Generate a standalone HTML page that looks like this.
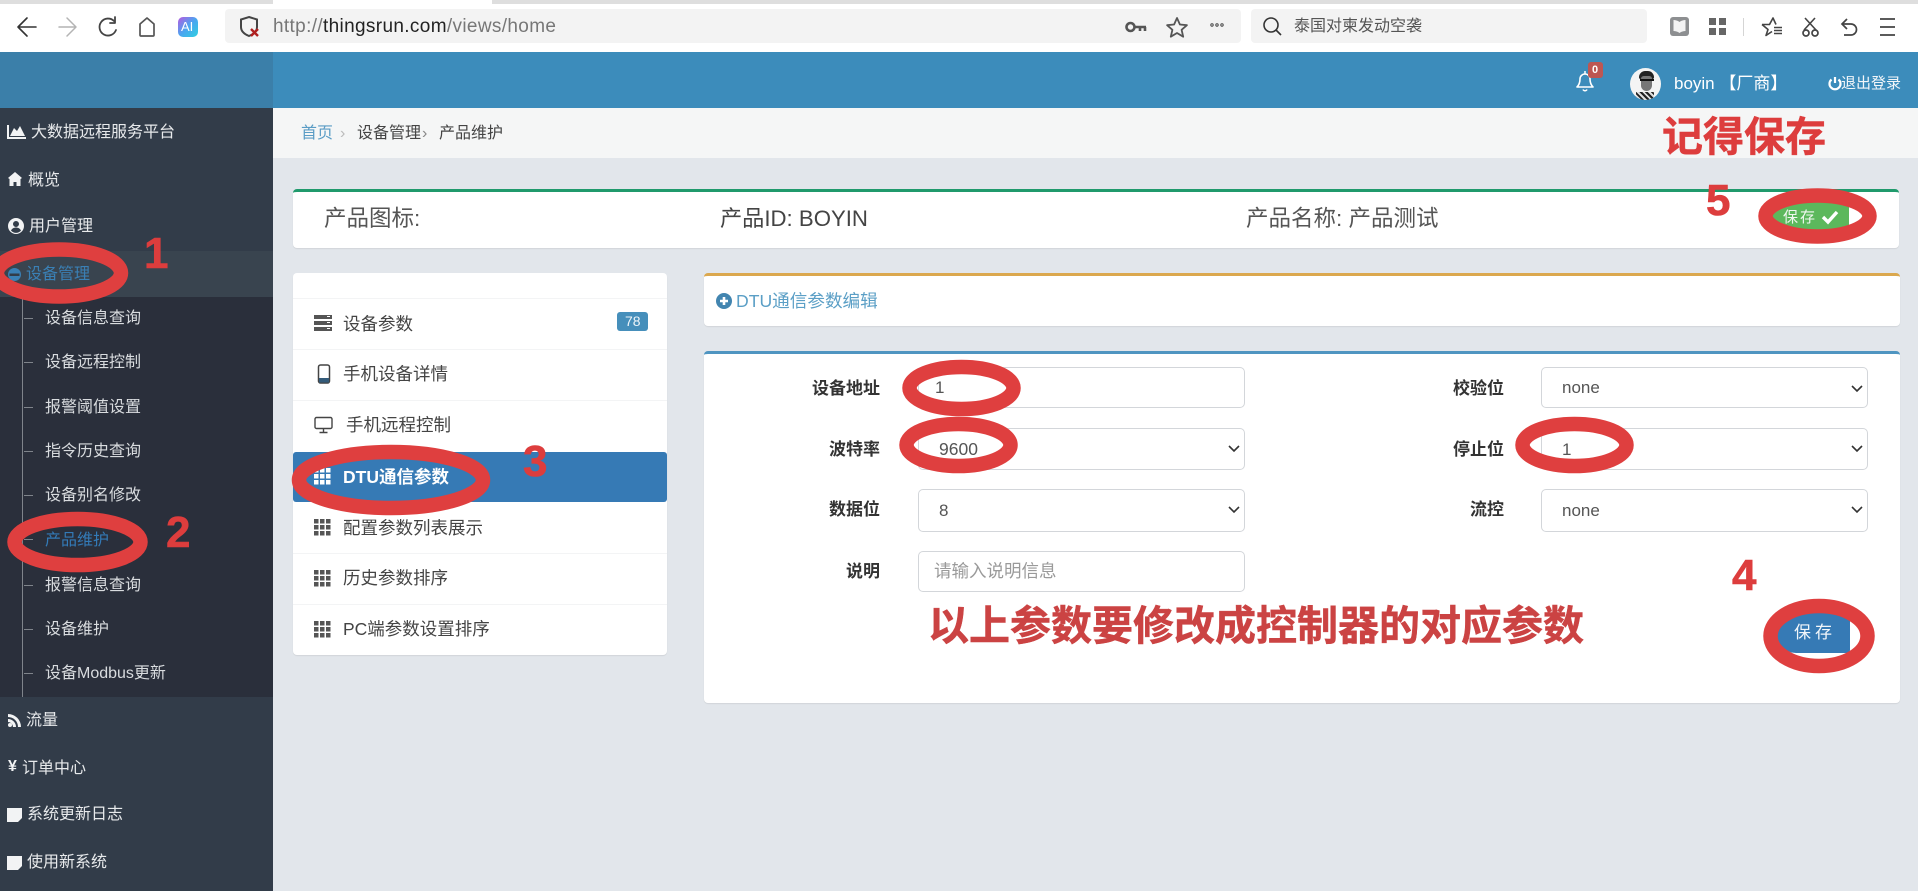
<!DOCTYPE html>
<html lang="zh-CN"><head><meta charset="utf-8"><title>DTU通信参数</title>
<style>
html,body{margin:0;padding:0;width:1918px;height:891px;overflow:hidden;background:#e2e6eb;font-family:"Liberation Sans","Noto Sans CJK SC",sans-serif}
.a{position:absolute}
.t{position:absolute;white-space:nowrap;line-height:1}
.card{position:absolute;background:#fff;border-radius:4px;box-shadow:0 1px 1px rgba(0,0,0,.08);box-sizing:border-box}
.s{font-size:16px;color:#e8eaec}
.sub{font-size:16px;color:#d9dcdf;left:45px}
.li{font-size:17.5px;color:#444;left:343px}
.lab{font-size:17px;font-weight:700;color:#333;text-align:right}
.f{position:absolute;box-sizing:border-box;background:#fff;border:1px solid #d3d6da;border-radius:5px;font:17px "Liberation Sans","Noto Sans CJK SC",sans-serif;color:#555;outline:0;margin:0;-webkit-appearance:none;appearance:none}
.f::placeholder{color:#9a9a9a;opacity:1}
.red{color:#dd3d3d;font-weight:700;font-family:"Noto Sans CJK SC",sans-serif;-webkit-text-stroke:.5px currentColor}
.num{color:#dd3d3d;font-weight:700;font-family:"Liberation Sans",sans-serif;font-size:44px;-webkit-text-stroke:.6px currentColor}
svg{position:absolute;overflow:visible}
</style></head><body>

<!-- browser chrome -->
<div class="a" style="left:0;top:0;width:1918px;height:52px;background:#fff"></div>
<div class="a" style="left:0;top:0;width:273px;height:4px;background:#dedede"></div>
<div class="a" style="left:492px;top:0;width:1426px;height:4px;background:#dedede"></div>
<svg style="left:0;top:0" width="270" height="52" fill="none" stroke-linecap="round" stroke-linejoin="round">
<path d="M36 27H19M27 18l-9 9 9 9" stroke="#333" stroke-width="1.6"/>
<path d="M59 27h16M67 18l9 9-9 9" stroke="#b4b4b4" stroke-width="1.5"/>
<path d="M114 21a8.5 8.5 0 1 0 2 9" stroke="#444" stroke-width="1.8"/><path d="M115 17v6h-5" stroke="#444" stroke-width="1.8"/>
<path d="M140 35V24l7-6 7 6v11a1 1 0 0 1-1 1h-12a1 1 0 0 1-1-1z" stroke="#555" stroke-width="1.7"/>
</svg>
<div class="a" style="left:178px;top:17px;width:20px;height:20px;border-radius:5px;background:linear-gradient(135deg,#b65ae0 0%,#4aa5f0 50%,#2fd0e0 100%)"></div>
<div class="t" style="left:181px;top:20px;font-size:13px;color:#fff">AI</div>
<div class="a" style="left:225px;top:9px;width:1016px;height:34px;background:#f3f3f3;border-radius:4px"></div>
<div class="a" style="left:1251px;top:9px;width:396px;height:34px;background:#f3f3f3;border-radius:4px"></div>
<svg style="left:238px;top:14px" width="24" height="26" fill="none"><path d="M11 3l8 2.500V13c0 4-3 7-8 9-5-2-8-5-8-9V5.500z" stroke="#444" stroke-width="2"/><path d="M13 15l7 7M20 15l-7 7" stroke="#b02020" stroke-width="2.400"/></svg>
<div class="t" style="left:273px;top:17px;font-size:19px;letter-spacing:.35px;color:#777">http://<span style="color:#222">thingsrun.com</span>/views/home</div>
<svg style="left:1120px;top:14px" width="120" height="24" fill="none">
<circle cx="10.500" cy="13" r="4" stroke="#555" stroke-width="2.600"/><path d="M14 13h12M20 13v4M25 13v4" stroke="#555" stroke-width="2.600"/>
<path d="M57 4l2.900 6.500 7 .7-5.300 4.600 1.600 6.900-6.200-3.700-6.200 3.700 1.600-6.900-5.300-4.600 7-.7z" stroke="#555" stroke-width="1.800" stroke-linejoin="round"/>
<circle cx="92" cy="11" r="1.200" stroke="#444"/><circle cx="97" cy="11" r="1.200" stroke="#444"/><circle cx="102" cy="11" r="1.200" stroke="#444"/>
</svg>
<svg style="left:1262px;top:16px" width="22" height="22" fill="none"><circle cx="9" cy="9" r="7" stroke="#333" stroke-width="1.600"/><path d="M14 14l5 5" stroke="#333" stroke-width="1.600"/></svg>
<div class="t" style="left:1294px;top:19px;font-size:16px;color:#555">泰国对柬发动空袭</div>
<svg style="left:1660px;top:8px" width="258" height="40" fill="none">
<rect x="10" y="9" width="19" height="19" rx="3" fill="#8d8f91"/><path d="M19.500 14c-2-1.500-4-2-6-2v11c2 0 4 .5 6 2 2-1.500 4-2 6-2V12c-2 0-4 .5-6 2z" fill="#f3f3f3"/>
<g fill="#666"><rect x="49" y="10" width="7" height="7"/><rect x="59" y="10" width="7" height="7"/><rect x="49" y="20" width="7" height="7"/><rect x="59" y="20" width="7" height="7"/></g>
<path d="M83.500 10v18" stroke="#d5d5d5"/>
<path d="M102 16.500h7.500l3.500-6.500 3 6.500M102 16.500l6 5-2 6 6-4" stroke="#444" stroke-width="1.600" stroke-linejoin="round"/><path d="M114 19.500h8M114 22.500h8M114 25.500h8" stroke="#444" stroke-width="1.500"/>
<path d="M145 10l11 12M155 10l-11 12" stroke="#444" stroke-width="1.600"/><circle cx="146" cy="25" r="3" stroke="#444" stroke-width="1.700"/><circle cx="155" cy="25" r="3" stroke="#444" stroke-width="1.700"/>
<path d="M182 16h9a5.500 5.500 0 0 1 0 11h-7" stroke="#444" stroke-width="1.700"/><path d="M187 11l-5 5 5 5" stroke="#444" stroke-width="1.700"/>
<path d="M220 11h15M220 19h15M220 27h15" stroke="#444" stroke-width="1.700"/>
</svg>

<!-- header -->
<div class="a" style="left:0;top:52px;width:273px;height:56px;background:#3b7fa9"></div>
<div class="a" style="left:273px;top:52px;width:1645px;height:56px;background:#3c8cbb"></div>
<svg style="left:1574px;top:68px" width="22" height="24" fill="none"><path d="M3 19c2-2 3-4 3-8a5 5 0 0 1 10 0c0 4 1 6 3 8z" stroke="#fff" stroke-width="1.600" stroke-linejoin="round"/><path d="M9 21.500a2.200 2.200 0 0 0 4 0" stroke="#fff" stroke-width="1.500"/><path d="M11 3v3" stroke="#fff" stroke-width="1.500"/></svg>
<div class="a" style="left:1588px;top:62px;width:15px;height:16px;background:#bd5652;border-radius:3px"></div>
<div class="t" style="left:1592px;top:65px;font-size:11px;font-weight:700;color:#fff">0</div>
<div class="a" style="left:1630px;top:68px;width:31px;height:32px;border-radius:50%;background:#f4f4f4;overflow:hidden">
<div class="a" style="left:9px;top:3px;width:15px;height:8px;border-radius:7px 7px 2px 2px;background:#222"></div>
<div class="a" style="left:11px;top:8px;width:11px;height:15px;border-radius:3px 3px 6px 6px;background:#777"></div>
<div class="a" style="left:10px;top:11px;width:14px;height:2px;background:#111"></div>
<div class="a" style="left:6px;top:24px;width:18px;height:8px;background:repeating-linear-gradient(45deg,#222 0 2px,#ddd 2px 4px)"></div>
</div>
<div class="t" style="left:1674px;top:75px;font-size:17px;color:#fff">boyin 【厂商】</div>
<svg style="left:1828px;top:75px" width="14" height="16" fill="none"><path d="M3.500 4.500a5.500 5.500 0 1 0 7 0" stroke="#fff" stroke-width="2.200"/><path d="M7 2v6" stroke="#fff" stroke-width="2.200"/></svg>
<div class="t" style="left:1841px;top:76px;font-size:15px;color:#f2f6f9">退出登录</div>

<!-- sidebar -->
<div class="a" style="left:0;top:108px;width:273px;height:783px;background:#323c49"></div>
<div class="a" style="left:0;top:251px;width:273px;height:46px;background:#39444f"></div>
<div class="a" style="left:0;top:297px;width:273px;height:400px;background:#2a2f3b"></div>
<div class="a" style="left:22px;top:297px;width:1px;height:400px;background:#7f848b"></div>
<svg style="left:0;top:108px" width="40" height="783" fill="#f2f3f4">
<path d="M7 17v14h19v-2H9V17zM10 28l4-8 3 3 3-5 5 10z"/>
<path d="M8 70l7-6 7 6-1.500 1V78h-4v-4h-3v4H9.500v-7z"/>
<path fill-rule="evenodd" d="M16 110a8 8 0 1 0 0 16 8 8 0 0 0 0-16zm0 3a3 3 0 1 1 0 6 3 3 0 0 1 0-6zm-5 9.500c1-2 3-3 5-3s4 1 5 3a6.500 6.500 0 0 1-10 0z"/>
<circle cx="14.500" cy="166.500" r="6.500" fill="#3a80b5"/><rect x="9.500" y="165.500" width="10" height="2.500" fill="#323c49"/>
<path d="M8 606a13 13 0 0 1 13 13h-3a10 10 0 0 0-10-10zM8 611a8 8 0 0 1 8 8h-3a5 5 0 0 0-5-5z"/><circle cx="10" cy="617" r="2"/>
<path d="M7 700h15v10l-4 4H7z"/>
<path d="M7 748h15v10l-4 4H7z"/>
</svg>
<div class="t" style="left:8px;top:759px;font-size:16px;font-weight:700;color:#f2f3f4">¥</div>
<svg style="left:24px;top:297px" width="12" height="400" stroke="#7f848b"><path d="M0 21.500h9M0 65.500h9M0 110.500h9M0 154.500h9M0 198.500h9M0 242.500h9M0 288.500h9M0 332.500h9M0 376.500h9"/></svg>
<div class="t s" style="left:31px;top:125px">大数据远程服务平台</div>
<div class="t s" style="left:28px;top:173px">概览</div>
<div class="t s" style="left:29px;top:219px">用户管理</div>
<div class="t s" style="left:26px;top:267px;color:#3a80b5">设备管理</div>
<div class="t sub" style="top:311px">设备信息查询</div>
<div class="t sub" style="top:355px">设备远程控制</div>
<div class="t sub" style="top:400px">报警阈值设置</div>
<div class="t sub" style="top:444px">指令历史查询</div>
<div class="t sub" style="top:488px">设备别名修改</div>
<div class="t sub" style="top:533px;color:#337ab7">产品维护</div>
<div class="t sub" style="top:578px">报警信息查询</div>
<div class="t sub" style="top:622px">设备维护</div>
<div class="t sub" style="top:666px">设备Modbus更新</div>
<div class="t s" style="left:26px;top:713px">流量</div>
<div class="t s" style="left:22px;top:761px">订单中心</div>
<div class="t s" style="left:27px;top:807px">系统更新日志</div>
<div class="t s" style="left:27px;top:855px">使用新系统</div>

<!-- breadcrumb -->
<div class="a" style="left:273px;top:108px;width:1645px;height:50px;background:#f5f6f6"></div>
<div class="t" style="left:301px;top:126px;font-size:16px;color:#5a9cc5">首页</div>
<div class="t" style="left:340px;top:126px;font-size:16px;color:#bbb">›</div>
<div class="t" style="left:357px;top:126px;font-size:16px;color:#444">设备管理</div>
<div class="t" style="left:422px;top:126px;font-size:16px;color:#888">›</div>
<div class="t" style="left:439px;top:126px;font-size:16px;color:#444">产品维护</div>

<!-- product card -->
<div class="card" style="left:293px;top:189px;width:1606px;height:59px;border-top:3px solid #209a6c"></div>
<div class="t" style="left:324px;top:208px;font-size:22.5px;color:#555">产品图标:</div>
<div class="t" style="left:720px;top:208px;font-size:22.2px;color:#444">产品ID: BOYIN</div>
<div class="t" style="left:1246px;top:208px;font-size:22.5px;color:#555">产品名称: 产品测试</div>
<div class="a" style="left:1772px;top:201px;width:77px;height:30px;background:#5cb85c;border-radius:3px"></div>
<div class="t" style="left:1783px;top:210px;font-size:15px;letter-spacing:2px;color:#f0f7f0">保存</div>
<svg style="left:1821px;top:210px" width="18" height="14" fill="none"><path d="M2 7l5 5 9-10" stroke="#fff" stroke-width="3.400"/></svg>

<!-- list card -->
<div class="card" style="left:293px;top:273px;width:374px;height:382px"></div>
<div class="a" style="left:293px;top:298px;width:374px;height:1px;background:#f3f4f5"></div>
<div class="a" style="left:293px;top:349px;width:374px;height:1px;background:#f3f4f5"></div>
<div class="a" style="left:293px;top:400px;width:374px;height:1px;background:#f3f4f5"></div>
<div class="a" style="left:293px;top:553px;width:374px;height:1px;background:#f3f4f5"></div>
<div class="a" style="left:293px;top:604px;width:374px;height:1px;background:#f3f4f5"></div>
<div class="a" style="left:293px;top:452px;width:374px;height:50px;background:#367ab5;border-radius:3px"></div>
<svg style="left:314px;top:314px" width="20" height="18" fill="#555"><rect width="18" height="4" y="1" /><rect width="18" height="4" y="7"/><rect width="18" height="4" y="13"/><path d="M13 2.500h3M13 8.500h3M13 14.500h3" stroke="#fff"/></svg>
<svg style="left:317px;top:364px" width="14" height="20" fill="none"><rect x="1.500" y="1" width="11" height="18" rx="2" stroke="#444" stroke-width="1.500"/><rect x="2" y="14" width="10" height="4.500" fill="#345b7a"/></svg>
<svg style="left:314px;top:416px" width="20" height="18" fill="none"><rect x="1" y="1.500" width="17" height="11" rx="1.500" stroke="#444" stroke-width="1.400"/><path d="M9.500 13v3M5.500 16.500h8" stroke="#444" stroke-width="1.400"/></svg>
<svg style="left:314px;top:467px" width="18" height="18" fill="#fff"><rect width="4.500" height="4.500" x="0" y="1"/><rect width="4.500" height="4.500" x="6" y="1"/><rect width="4.500" height="4.500" x="12" y="1"/><rect width="4.500" height="4.500" x="0" y="7"/><rect width="4.500" height="4.500" x="6" y="7"/><rect width="4.500" height="4.500" x="12" y="7"/><rect width="4.500" height="4.500" x="0" y="13"/><rect width="4.500" height="4.500" x="6" y="13"/><rect width="4.500" height="4.500" x="12" y="13"/></svg>
<svg style="left:314px;top:518px" width="18" height="18" fill="#555"><rect width="4.500" height="4.500" x="0" y="1"/><rect width="4.500" height="4.500" x="6" y="1"/><rect width="4.500" height="4.500" x="12" y="1"/><rect width="4.500" height="4.500" x="0" y="7"/><rect width="4.500" height="4.500" x="6" y="7"/><rect width="4.500" height="4.500" x="12" y="7"/><rect width="4.500" height="4.500" x="0" y="13"/><rect width="4.500" height="4.500" x="6" y="13"/><rect width="4.500" height="4.500" x="12" y="13"/></svg>
<svg style="left:314px;top:569px" width="18" height="18" fill="#555"><rect width="4.500" height="4.500" x="0" y="1"/><rect width="4.500" height="4.500" x="6" y="1"/><rect width="4.500" height="4.500" x="12" y="1"/><rect width="4.500" height="4.500" x="0" y="7"/><rect width="4.500" height="4.500" x="6" y="7"/><rect width="4.500" height="4.500" x="12" y="7"/><rect width="4.500" height="4.500" x="0" y="13"/><rect width="4.500" height="4.500" x="6" y="13"/><rect width="4.500" height="4.500" x="12" y="13"/></svg>
<svg style="left:314px;top:620px" width="18" height="18" fill="#555"><rect width="4.500" height="4.500" x="0" y="1"/><rect width="4.500" height="4.500" x="6" y="1"/><rect width="4.500" height="4.500" x="12" y="1"/><rect width="4.500" height="4.500" x="0" y="7"/><rect width="4.500" height="4.500" x="6" y="7"/><rect width="4.500" height="4.500" x="12" y="7"/><rect width="4.500" height="4.500" x="0" y="13"/><rect width="4.500" height="4.500" x="6" y="13"/><rect width="4.500" height="4.500" x="12" y="13"/></svg>
<div class="t li" style="top:316px">设备参数</div>
<div class="a" style="left:617px;top:312px;width:31px;height:19px;background:#468fbb;border-radius:3px"></div>
<div class="t" style="left:625px;top:314px;font-size:14px;color:#eef5f9">78</div>
<div class="t li" style="top:366px">手机设备详情</div>
<div class="t li" style="top:417px;left:346px">手机远程控制</div>
<div class="t li" style="top:469px;color:#fff;font-weight:700">DTU通信参数</div>
<div class="t li" style="top:520px">配置参数列表展示</div>
<div class="t li" style="top:570px">历史参数排序</div>
<div class="t li" style="top:621px">PC端参数设置排序</div>

<!-- edit title card -->
<div class="card" style="left:704px;top:273px;width:1196px;height:53px;border-top:3px solid #dba84e"></div>
<svg style="left:716px;top:293px" width="16" height="16"><circle cx="8" cy="8" r="8" fill="#4285b0"/><path d="M8 4v8M4 8h8" stroke="#fff" stroke-width="2.600"/></svg>
<div class="t" style="left:736px;top:293px;font-size:17.6px;color:#5b9fc6">DTU通信参数编辑</div>

<!-- form card -->
<div class="card" style="left:704px;top:351px;width:1196px;height:352px;border-top:3px solid #4f95c1"></div>
<div class="t lab" style="left:780px;width:100px;top:380px">设备地址</div>
<div class="t lab" style="left:780px;width:100px;top:441px">波特率</div>
<div class="t lab" style="left:780px;width:100px;top:501px">数据位</div>
<div class="t lab" style="left:780px;width:100px;top:563px">说明</div>
<div class="t lab" style="left:1404px;width:100px;top:380px">校验位</div>
<div class="t lab" style="left:1404px;width:100px;top:441px">停止位</div>
<div class="t lab" style="left:1404px;width:100px;top:501px">流控</div>

<input class="f" style="left:918px;top:367px;width:327px;height:41px;padding:0 16px" value="1">
<select class="f" style="left:918px;top:428px;width:327px;height:42px;padding:0 0 0 20px;font-size:17.500px"><option>9600</option></select>
<select class="f" style="left:918px;top:489px;width:327px;height:43px;padding:0 0 0 20px"><option>8</option></select>
<input class="f" style="left:918px;top:551px;width:327px;height:41px;padding:0 15px;font-size:17.500px" placeholder="请输入说明信息">
<select class="f" style="left:1541px;top:367px;width:327px;height:41px;padding:0 0 0 20px"><option>none</option></select>
<select class="f" style="left:1541px;top:428px;width:327px;height:42px;padding:0 0 0 20px"><option>1</option></select>
<select class="f" style="left:1541px;top:489px;width:327px;height:43px;padding:0 0 0 20px"><option>none</option></select>
<svg style="left:1228px;top:445px" width="12" height="8" fill="none" stroke="#333" stroke-width="1.600"><path d="M1 1l5 5 5-5"/></svg>
<svg style="left:1228px;top:506px" width="12" height="8" fill="none" stroke="#333" stroke-width="1.600"><path d="M1 1l5 5 5-5"/></svg>
<svg style="left:1851px;top:385px" width="12" height="8" fill="none" stroke="#333" stroke-width="1.600"><path d="M1 1l5 5 5-5"/></svg>
<svg style="left:1851px;top:445px" width="12" height="8" fill="none" stroke="#333" stroke-width="1.600"><path d="M1 1l5 5 5-5"/></svg>
<svg style="left:1851px;top:506px" width="12" height="8" fill="none" stroke="#333" stroke-width="1.600"><path d="M1 1l5 5 5-5"/></svg>

<div class="a" style="left:1776px;top:610px;width:74px;height:43px;background:#367ab5;border-radius:20px 3px 3px 20px"></div>
<div class="t" style="left:1794px;top:624px;font-size:17px;letter-spacing:4px;color:#f2f6fa">保存</div>

<!-- annotations -->
<svg style="left:0;top:0" width="1918" height="891" fill="none" stroke="#df3f3f" stroke-width="14.500">
<ellipse cx="59" cy="273" rx="62" ry="23.500"/>
<ellipse cx="77.500" cy="542" rx="63" ry="23"/>
<ellipse cx="391" cy="480" rx="92" ry="28"/>
<ellipse cx="961.500" cy="388" rx="52" ry="21"/>
<ellipse cx="958.500" cy="445" rx="52" ry="21"/>
<ellipse cx="1574.500" cy="445" rx="52" ry="21"/>
<ellipse cx="1819" cy="636" rx="48.500" ry="30"/>
<ellipse cx="1817.500" cy="216" rx="52" ry="20.500"/>
</svg>
<div class="t red" style="left:1662px;top:113px;font-size:41px">记得保存</div>
<div class="t red" style="left:928px;top:602px;font-size:41px;color:#cb4343">以上参数要修改成控制器的对应参数</div>
<div class="t num" style="left:144px;top:232px">1</div>
<div class="t num" style="left:166px;top:511px">2</div>
<div class="t num" style="left:523px;top:440px">3</div>
<div class="t num" style="left:1732px;top:554px">4</div>
<div class="t num" style="left:1706px;top:179px">5</div>
</body></html>
